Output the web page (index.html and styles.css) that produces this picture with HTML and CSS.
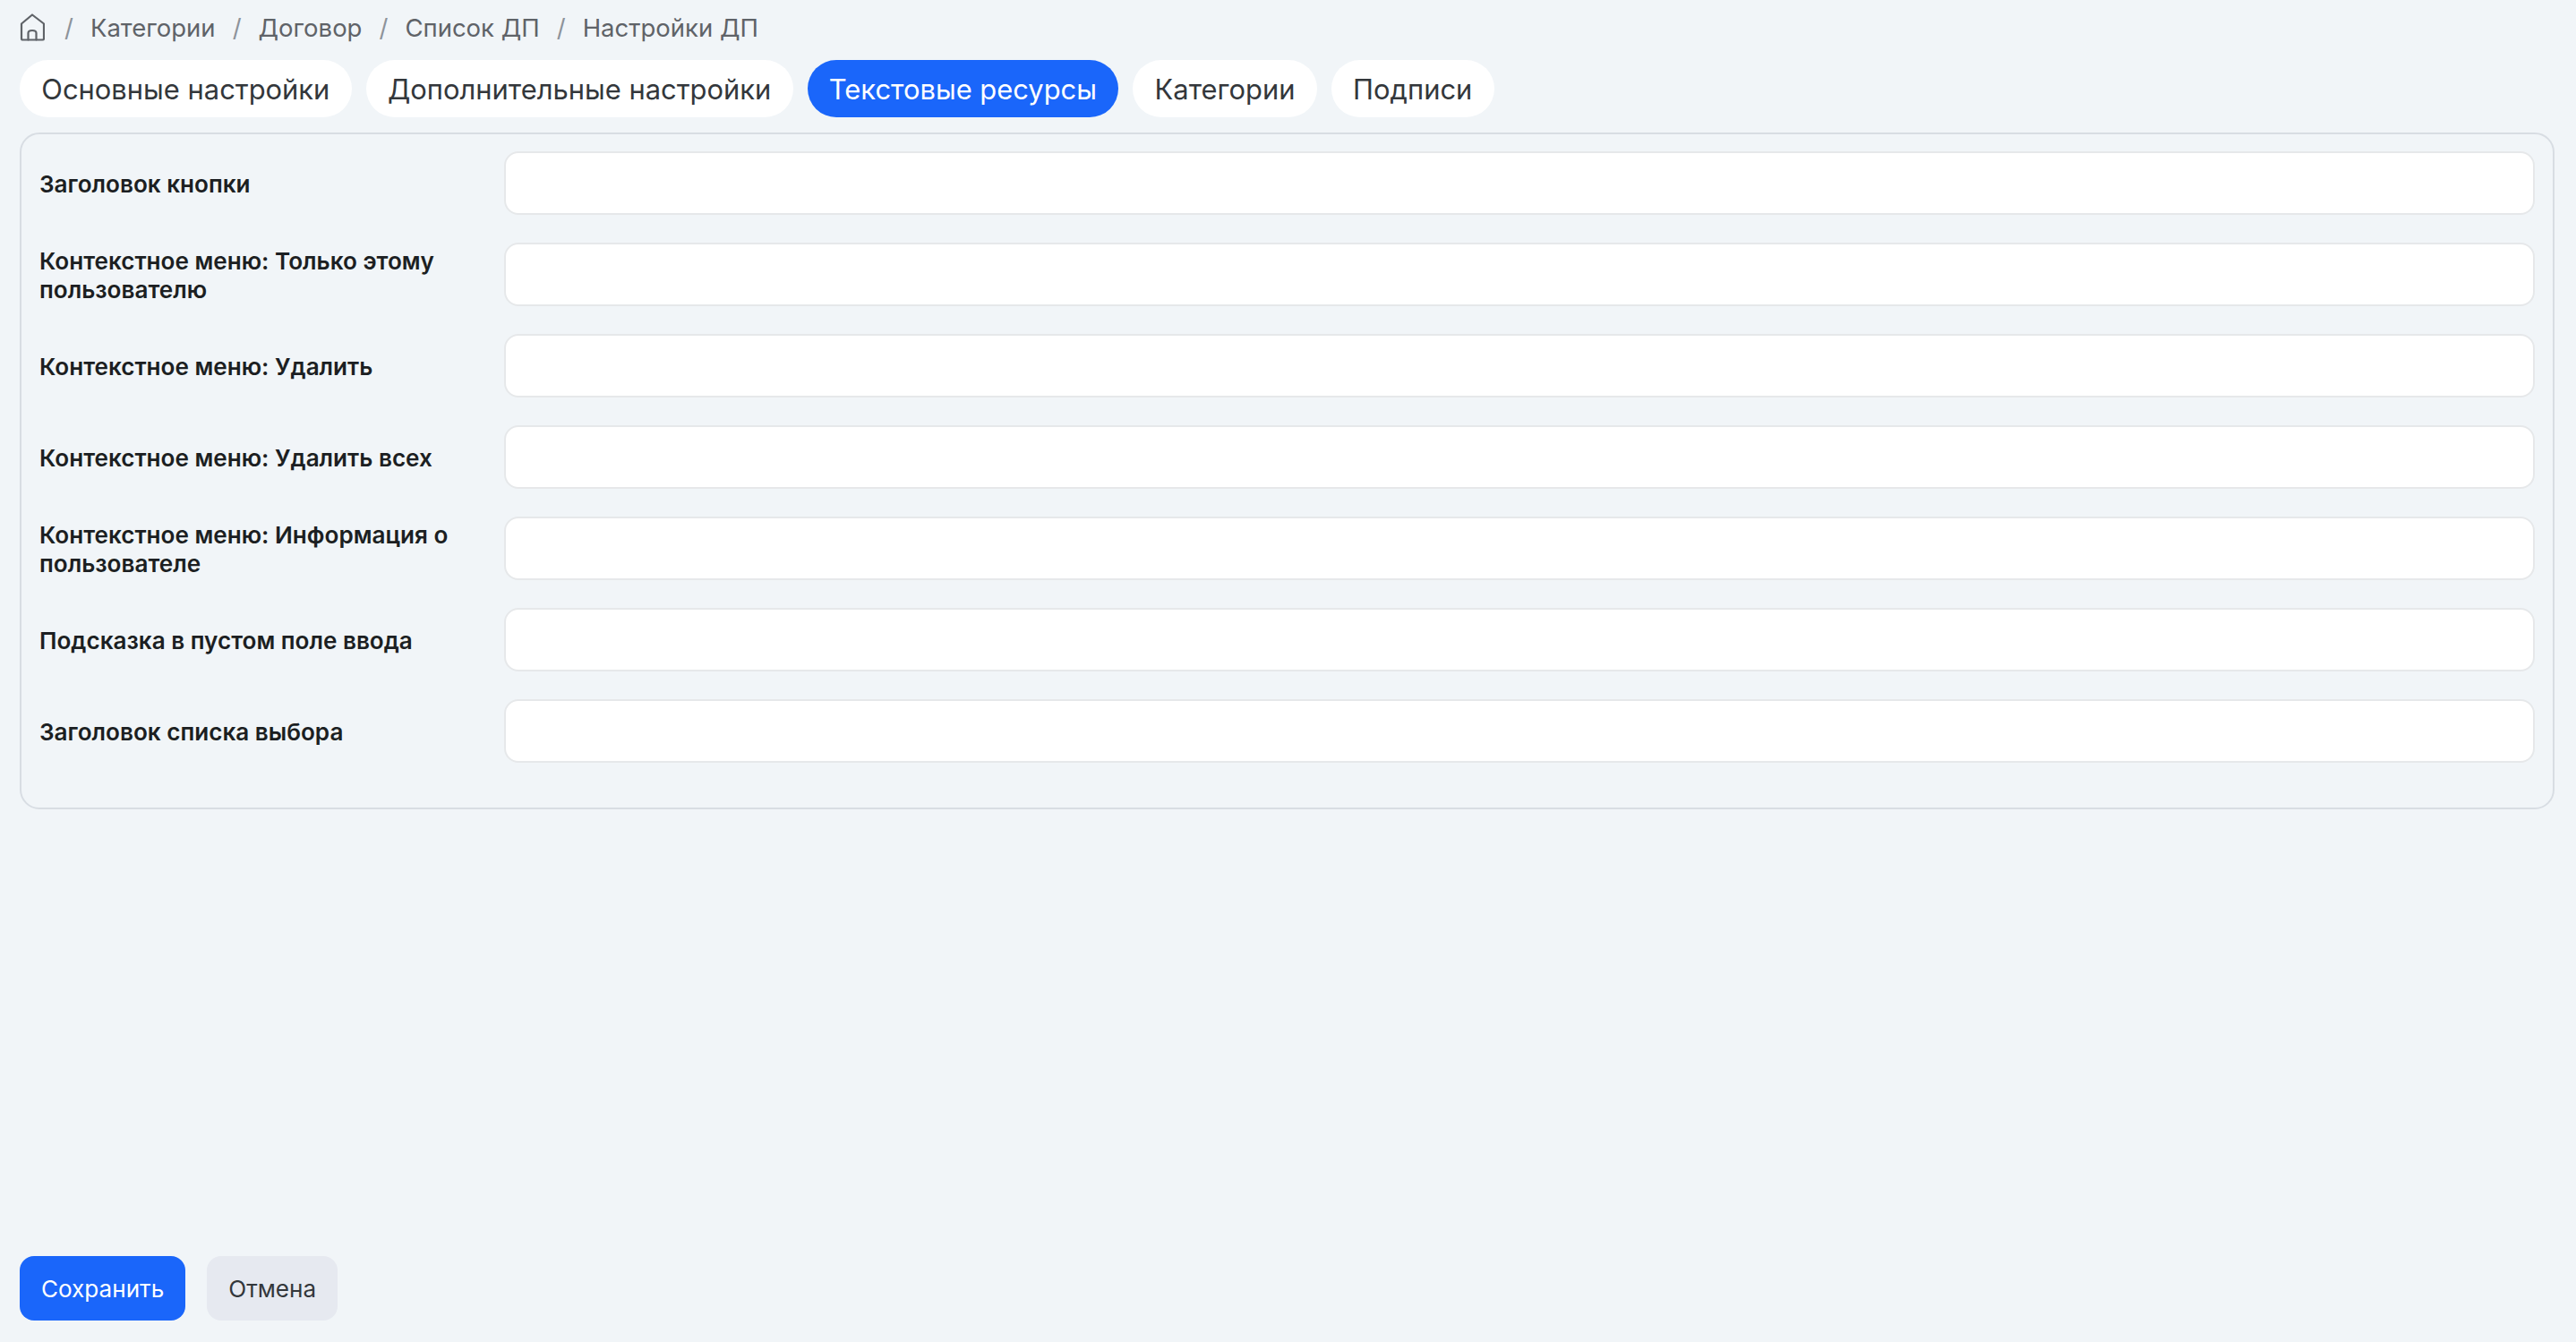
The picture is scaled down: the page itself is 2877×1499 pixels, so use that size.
FILE: index.html
```html
<!DOCTYPE html>
<html lang="ru">
    <head>
        <meta charset="UTF-8">
        <title>Настройки ДП</title>
        <link rel="stylesheet" href="styles.css">
    </head>
    <body>
        <nav class="crumbs">
            <a href="#" class="home">
                <svg width="28" height="31" viewBox="0 0 28 31" fill="none" stroke="#5f6368" stroke-width="2.2" stroke-linejoin="round" stroke-linecap="round">
                    <path d="M14 1.5 L27 11.5 V28 Q27 29.5 25.5 29.5 H3.5 Q2 29.5 2 28 V11.5 Z"/>
                    <path d="M9.5 29.5 V22 Q9.5 19 14 19 Q18.5 19 18.5 22 V29.5"/>
                </svg>
            </a>
            <span class="sep first">/</span>
            <a href="#">Категории</a>
            <span class="sep">/</span>
            <a href="#">Договор</a>
            <span class="sep">/</span>
            <a href="#">Список ДП</a>
            <span class="sep">/</span>
            <a href="#">Настройки ДП</a>
        </nav>
        <div class="tabs">
            <a href="#" class="tab">Основные настройки</a>
            <a href="#" class="tab">Дополнительные настройки</a>
            <a href="#" class="tab active">Текстовые ресурсы</a>
            <a href="#" class="tab">Категории</a>
            <a href="#" class="tab">Подписи</a>
        </div>
        <form class="panel">
            <div class="row">
                <label>Заголовок кнопки</label>
                <input type="text">
            </div>
            <div class="row">
                <label>Контекстное меню: Только этому пользователю</label>
                <input type="text">
            </div>
            <div class="row">
                <label>Контекстное меню: Удалить</label>
                <input type="text">
            </div>
            <div class="row">
                <label>Контекстное меню: Удалить всех</label>
                <input type="text">
            </div>
            <div class="row">
                <label>Контекстное меню: Информация о пользователе</label>
                <input type="text">
            </div>
            <div class="row">
                <label>Подсказка в пустом поле ввода</label>
                <input type="text">
            </div>
            <div class="row">
                <label>Заголовок списка выбора</label>
                <input type="text">
            </div>
        </form>
        <div class="actions">
            <button class="btn primary">Сохранить</button>
            <button class="btn">Отмена</button>
        </div>
    </body>
</html>
```

FILE: styles.css
```css
*{
    padding: 0;
    margin: 0;
    box-sizing: border-box;
}
html,body{
    height: 100%;
}
body{
    display: flex;
    flex-direction: column;
    padding: 13px 24px 24px 22px;
    background: #f1f5f8;
    font-family: Inter, "Noto Sans", sans-serif;
    color: #33373b;
}
a{
    color: inherit;
    text-decoration: none;
}
.crumbs{
    display: flex;
    align-items: center;
    height: 36px;
    font-size: 27.5px;
    color: #5f6368;
}
.home{
    display: flex;
    margin-top: -2px;
}
.sep{
    margin: 0 19px;
    color: #8d939a;
}
.sep.first{
    margin-left: 22px;
}
.tabs{
    display: flex;
    gap: 16px;
    margin-top: 18px;
}
.tab{
    display: flex;
    align-items: center;
    height: 64px;
    padding: 0 24.3px;
    border-radius: 32px;
    background: #fff;
    font-size: 30.9px;
}
.tab.active{
    background: #1a66fa;
    color: #fff;
}
.panel{
    display: flex;
    flex-direction: column;
    gap: 31px;
    margin-top: 17px;
    padding: 19px 20px 50px;
    border: 2px solid #d8dde3;
    border-radius: 22px;
}
.row{
    display: grid;
    grid-template-columns: 519px 1fr;
    align-items: center;
}
.row label{
    padding: 2px 20px 0 0;
    font-size: 26.1px;
    font-weight: 600;
    line-height: 32px;
    color: #1c1f22;
}
.row input{
    height: 71px;
    border: 2px solid #e6e8ea;
    border-radius: 16px;
    background: #fff;
}
.actions{
    display: flex;
    gap: 24px;
    margin-top: auto;
}
.btn{
    height: 72px;
    padding: 0 24px;
    border: 0;
    border-radius: 16px;
    background: #e6e9f0;
    color: #33373b;
    font-family: inherit;
    font-size: 26.1px;
}
.btn.primary{
    background: #1a66fa;
    color: #fff;
}
```
